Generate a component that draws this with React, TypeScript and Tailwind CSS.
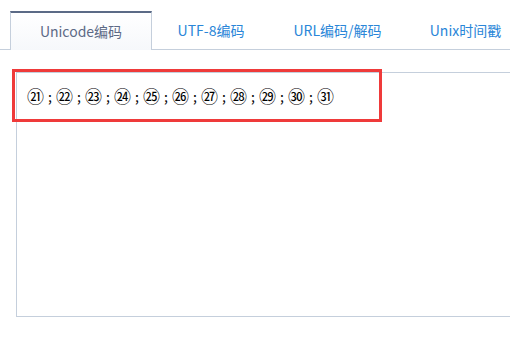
import React from "react";

const tabs = [
  { label: "Unicode编码", w: "w-[142px]", active: true },
  { label: "UTF-8编码", w: "w-[118px]", active: false },
  { label: "URL编码/解码", w: "w-[135px]", active: false },
  { label: "Unix时间戳", w: "w-[121px]", active: false },
];

const nums = ["㉑", "㉒", "㉓", "㉔", "㉕", "㉖", "㉗", "㉘", "㉙", "㉚", "㉛"];

export default function App() {
  return (
    <div
      className="w-[510px] h-[359px] overflow-hidden bg-white"
      style={{ fontFamily: '"Noto Sans CJK SC", "Noto Sans", sans-serif' }}
    >
      <div className="flex pl-[10px] pt-[11px] h-[50px] border-b border-[#c5cfdc]">
        {tabs.map((t) =>
          t.active ? (
            <div
              key={t.label}
              className={`${t.w} shrink-0 h-[39px] -mb-px flex items-center justify-center border-t-2 border-x border-t-[#5b6a86] border-x-[#c5cfdc] bg-gradient-to-b from-white to-[#f6f8fb] text-[14px] text-[#5d6a86]`}
            >
              {t.label}
            </div>
          ) : (
            <div
              key={t.label}
              className={`${t.w} shrink-0 h-[38px] flex items-center justify-center pt-[1px] text-[14px] text-[#2a86d8]`}
            >
              {t.label}
            </div>
          )
        )}
      </div>
      <div className="relative mt-[22px] ml-[16px]">
        <div className="h-[245px] border-l border-t border-b border-[#c5cfdc] pl-[10px] pt-[11px]">
          <div className="flex items-center h-[24px] text-[14px] text-black whitespace-nowrap">
            {nums.map((n, i) => (
              <React.Fragment key={n}>
                <span className="text-[17px] leading-[24px]">{n}</span>
                {i < nums.length - 1 && (
                  <span className="w-[12px] text-center leading-[24px]">;</span>
                )}
              </React.Fragment>
            ))}
          </div>
        </div>
        <div className="absolute left-[-4px] top-[-3px] w-[370px] h-[53px] border-[3px] border-[#ef3a3a]" />
      </div>
    </div>
  );
}
